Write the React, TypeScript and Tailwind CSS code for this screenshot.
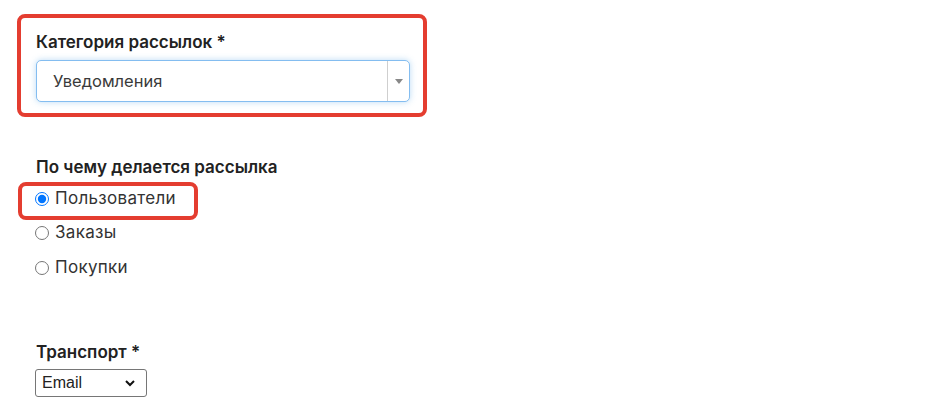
import React from "react";

const labelFont = { fontFamily: "Inter, 'Noto Sans', sans-serif" };

const App = () => {
  return (
    <div
      className="w-[931px] h-[416px] bg-white text-[#222] pt-[14px] overflow-hidden"
      style={labelFont}
    >
      <div className="ml-[17px] w-[410px] border-4 border-[#e43d30] rounded-[8px] pl-[15px] pr-[13px] pt-[12px] pb-[11px]">
        <div className="text-[17px] leading-[24px] font-semibold">
          Категория рассылок *
        </div>
        <div className="mt-[6px] h-[42px] flex items-stretch bg-white border border-[#84bdf0] rounded-[5px] shadow-[0_0_6px_rgba(102,175,233,0.45)]">
          <div className="flex-1 flex items-center pl-[16px] text-[16.5px] text-[#3a3a3a]">
            Уведомления
          </div>
          <div className="w-[22px] border-l border-[#cfcfcf] flex items-center justify-center">
            <svg width="8" height="5" viewBox="0 0 8 5">
              <path d="M0 0h8L4 5z" fill="#888" />
            </svg>
          </div>
        </div>
      </div>

      <div className="ml-[36px] mt-[38px] text-[17px] leading-[24px] font-semibold">
        По чему делается рассылка
      </div>

      <div className="ml-[18px] mt-[3px] w-[180px] border-4 border-[#e43d30] rounded-[8px] pl-[13px] pt-[1px] pb-[5px]">
        <label className="flex items-center h-[24px] text-[17px] tracking-[0.3px] text-[#333]">
          <input type="radio" name="by" defaultChecked className="w-[14px] h-[14px] m-0 mr-[6px]" />
          Пользователи
        </label>
      </div>

      <label className="ml-[35px] mt-[1px] flex items-center h-[24px] text-[17px] tracking-[0.3px] text-[#333]">
        <input type="radio" name="by" className="w-[14px] h-[14px] m-0 mr-[6px]" />
        Заказы
      </label>
      <label className="ml-[35px] mt-[11px] flex items-center h-[24px] text-[17px] tracking-[0.3px] text-[#333]">
        <input type="radio" name="by" className="w-[14px] h-[14px] m-0 mr-[6px]" />
        Покупки
      </label>

      <div className="ml-[36px] mt-[60px] text-[17px] leading-[24px] font-semibold">
        Транспорт *
      </div>
      <div className="ml-[35px] mt-[5px] relative w-[112px] h-[28px]">
        <select
          className="appearance-none w-full h-full border border-[#767676] rounded-[3px] pl-[6px] text-[16px] text-[#222] bg-white"
          style={{ fontFamily: "'Liberation Sans', Arial, sans-serif" }}
          defaultValue="email"
        >
          <option value="email">Email</option>
          <option value="sms">SMS</option>
        </select>
        <svg
          className="absolute right-[12px] top-[11px] pointer-events-none"
          width="10"
          height="7"
          viewBox="0 0 10 7"
        >
          <path d="M1 1l4 4 4-4" fill="none" stroke="#111" strokeWidth="2" />
        </svg>
      </div>
    </div>
  );
};

export default App;
